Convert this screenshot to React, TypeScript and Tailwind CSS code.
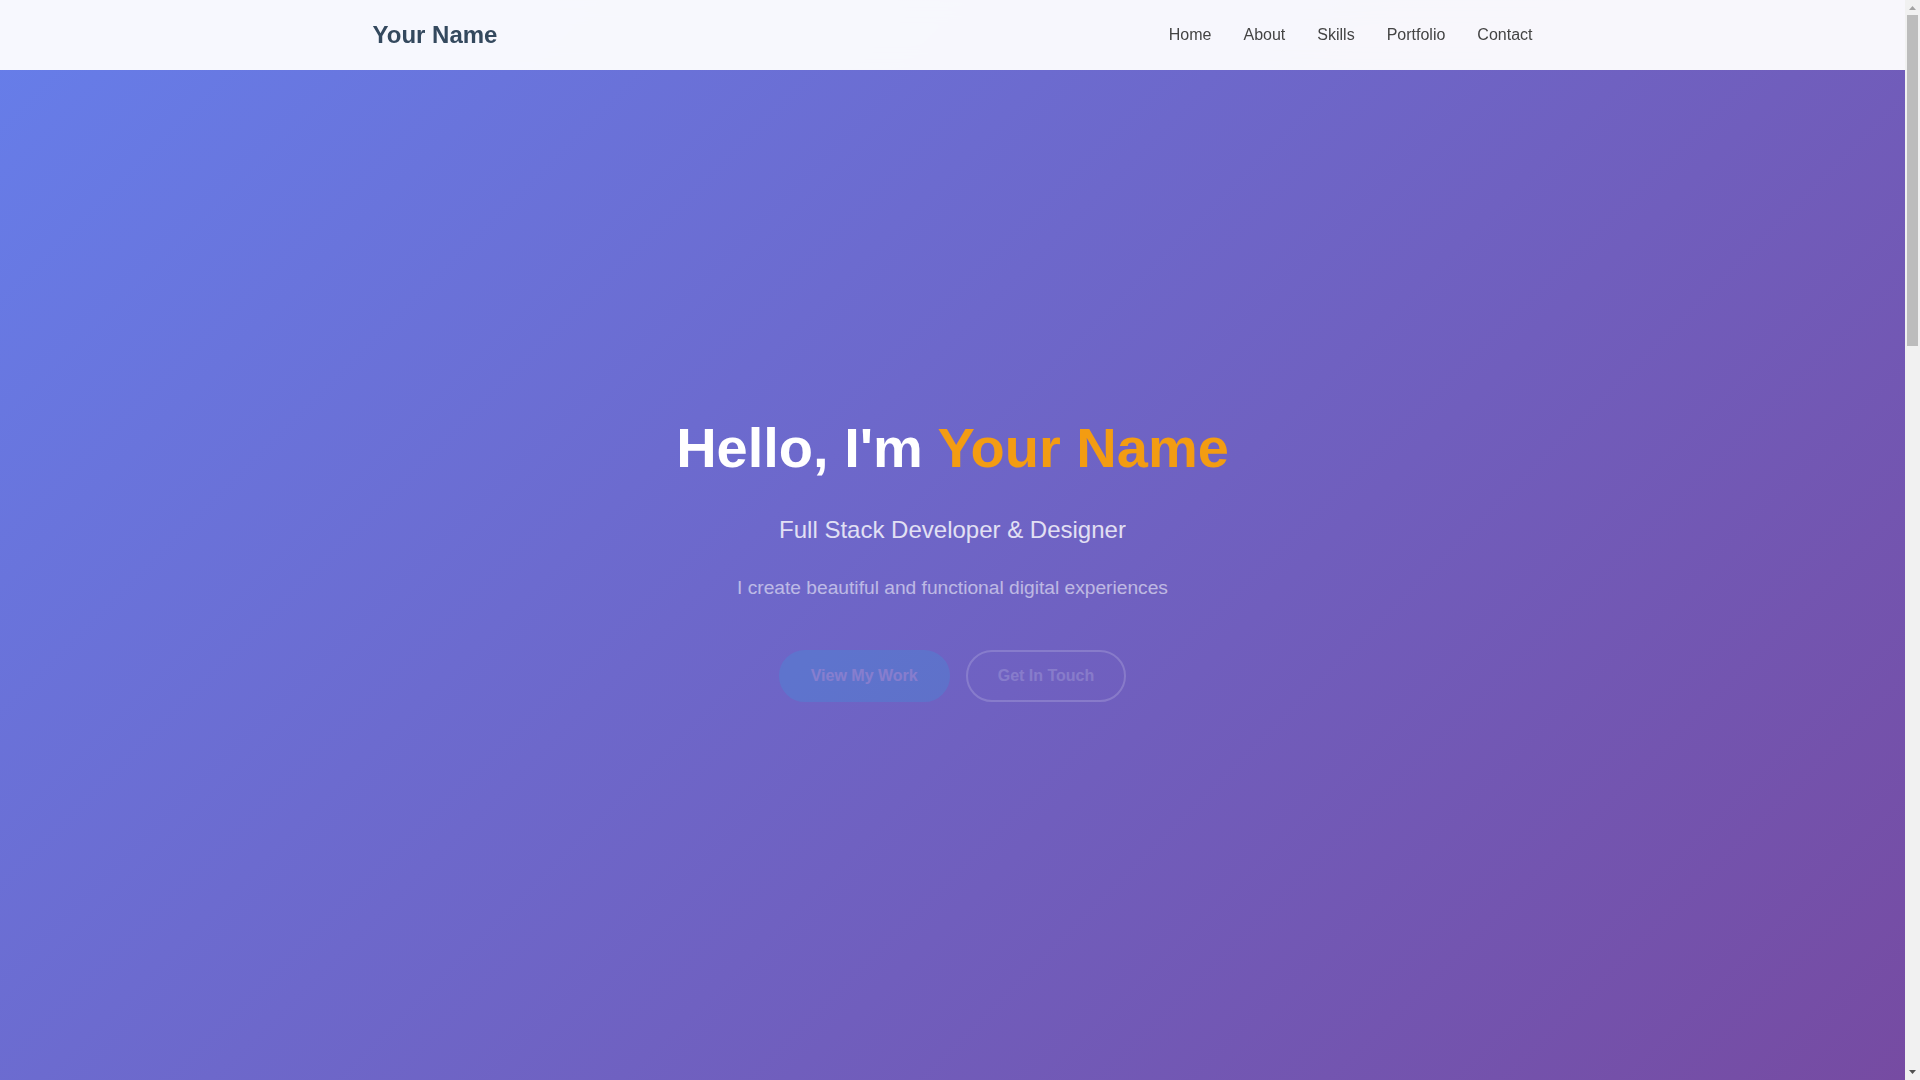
export default function App() {
  const links = ["Home", "About", "Skills", "Portfolio", "Contact"];
  return (
    <div className="flex h-screen overflow-hidden font-['Liberation_Sans',Arial,sans-serif] text-[#333] leading-[1.6]">
      <main className="relative min-w-0 flex-1">
        <nav className="absolute top-0 left-0 right-0 z-10 h-[70px] bg-white/95 backdrop-blur-[10px]">
          <div className="mx-auto flex h-full max-w-[1200px] items-center justify-between px-5">
            <div className="text-2xl font-bold text-[#34495e]">Your Name</div>
            <ul className="flex gap-8">
              {links.map((l) => (
                <li key={l}>
                  <a href="#" className="text-base text-[#444]">{l}</a>
                </li>
              ))}
            </ul>
          </div>
        </nav>
        <section className="flex h-full flex-col items-center justify-center bg-[linear-gradient(135deg,#667eea_0%,#764ba2_100%)] pt-[25px] text-center text-white">
          <h1 className="mb-[21px] text-[56px] font-bold leading-[1.6]">
            Hello, I'm <span className="text-[#f39c12]">Your Name</span>
          </h1>
          <p className="mb-[27px] text-2xl opacity-80">Full Stack Developer &amp; Designer</p>
          <p className="mb-[46px] text-[19.2px] opacity-55">I create beautiful and functional digital experiences</p>
          <div className="flex justify-center gap-4 opacity-[0.17]">
            <a href="#" className="rounded-[50px] border-2 border-[#16bdef] bg-[#16bdef] px-[30px] py-[15px] text-base font-bold leading-[normal] text-white">View My Work</a>
            <a href="#" className="rounded-[50px] border-2 border-white px-[30px] py-[15px] text-base font-bold leading-[normal] text-white">Get In Touch</a>
          </div>
        </section>
      </main>
      <aside className="flex w-[15px] shrink-0 flex-col bg-[#f1f1f1]">
        <svg width="15" height="15" viewBox="0 0 15 15" className="shrink-0">
          <polygon points="4,10 7.5,6 11,10" fill="#a3a3a3" />
        </svg>
        <div className="ml-[2px] h-[331px] w-[11px] bg-[#bcbcbc]" />
        <div className="flex-1" />
        <svg width="15" height="15" viewBox="0 0 15 15" className="shrink-0">
          <polygon points="4,5 11,5 7.5,9" fill="#505050" />
        </svg>
      </aside>
    </div>
  );
}
